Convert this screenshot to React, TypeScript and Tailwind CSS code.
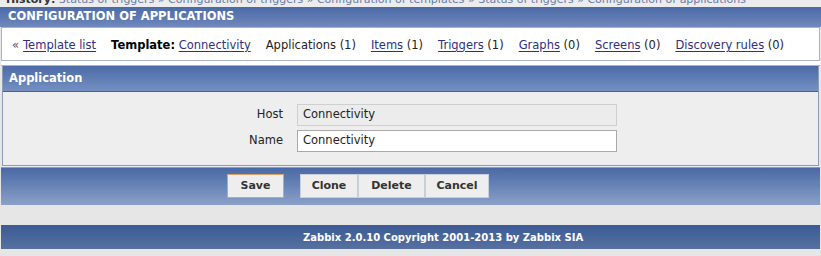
import React from "react";

const font = { fontFamily: '"DejaVu Sans", Verdana, sans-serif' };

function NavLink({ children }: { children: React.ReactNode }) {
  return <span className="underline text-[#2f2f80] underline-offset-[2px]">{children}</span>;
}

export default function App() {
  return (
    <div className="w-[821px] h-[256px] overflow-hidden bg-[#e6e6e6] text-[11.5px] text-black" style={font}>
      {/* History line (cut off) */}
      <div className="h-[7px] overflow-hidden bg-[#ececec]">
        <div className="-mt-[7px] pl-[6px] text-[#6a7ba8] whitespace-nowrap leading-[14px] text-[11px]">
          <span className="font-bold text-[#333]">History:</span> Status of triggers » Configuration of triggers » Configuration of templates » Status of triggers » Configuration of applications
        </div>
      </div>

      {/* Page header */}
      <div className="h-[20px] bg-gradient-to-b from-[#4b6aa6] to-[#7088bd] text-white font-bold pl-[8px] flex items-center">
        CONFIGURATION OF APPLICATIONS
      </div>

      {/* Navigation row */}
      <div className="mx-[1px] h-[34px] bg-white border border-[#a8b4c8] flex items-center pt-[3px] pl-[10px] gap-[15px] whitespace-nowrap text-[#222]">
        <span>
          <span className="text-[#555] mr-[4px]">«</span>
          <NavLink>Template list</NavLink>
        </span>
        <span>
          <span className="font-bold text-black">Template:</span> <NavLink>Connectivity</NavLink>
        </span>
        <span>Applications (1)</span>
        <span>
          <NavLink>Items</NavLink> (1)
        </span>
        <span>
          <NavLink>Triggers</NavLink> (1)
        </span>
        <span>
          <NavLink>Graphs</NavLink> (0)
        </span>
        <span>
          <NavLink>Screens</NavLink> (0)
        </span>
        <span>
          <NavLink>Discovery rules</NavLink> (0)
        </span>
      </div>

      <div className="h-[5px] bg-[#ffffff] border-b border-[#a8b4c8] mx-[1px]" />

      {/* Application form panel */}
      <div className="mx-[2px] border border-[#8d9bb8] border-t-0">
        <div className="h-[26px] bg-gradient-to-b from-[#4b6aa6] to-[#7590c2] border-b border-[#4a5f8c] text-white font-bold flex items-center pl-[6px]">
          Application
        </div>
        <div className="bg-[#eeeeee] pt-[12px] pb-[13px] grid grid-cols-[280px_320px] gap-x-[14px] gap-y-[4px] items-center">
          <div className="text-right text-[#222]">Host</div>
          <div className="h-[22px] border border-[#cfcfcf] bg-[#ececec] flex items-center pl-[5px] text-[#222]">Connectivity</div>
          <div className="text-right text-[#222]">Name</div>
          <div className="h-[22px] border border-[#a9a9a9] bg-white flex items-center pl-[5px] text-[#222]">Connectivity</div>
        </div>
      </div>

      <div className="h-[2px] bg-[#e8ecf3] mx-[1px] border-b border-[#8d9bb8]" />

      {/* Buttons bar */}
      <div className="mx-[1px] h-[37px] bg-gradient-to-b from-[#4a69a5] to-[#8aa0c8] grid grid-cols-[283px_1fr] gap-x-[16px] items-start pt-[6px]">
        <div className="flex justify-end">
          <button className="h-[24px] w-[57px] bg-[#eeeeee] border border-[#d9a46a] font-bold text-[#333] text-[11px]" style={font}>
            Save
          </button>
        </div>
        <div className="flex">
          <button className="h-[24px] w-[58px] bg-[#eeeeee] border border-[#c7cfdd] font-bold text-[#333] text-[11px]" style={font}>
            Clone
          </button>
          <button className="h-[24px] w-[67px] bg-[#eeeeee] border border-[#c7cfdd] font-bold text-[#333] text-[11px]" style={font}>
            Delete
          </button>
          <button className="h-[24px] w-[64px] bg-[#eeeeee] border border-[#c7cfdd] font-bold text-[#333] text-[11px]" style={font}>
            Cancel
          </button>
        </div>
      </div>

      <div className="h-[20px]" />

      {/* Footer */}
      <div className="mx-[1px] h-[24px] bg-gradient-to-b from-[#3c5a96] to-[#56719f] flex items-center pl-[302px] text-white font-bold text-[10px]">
        Zabbix 2.0.10 Copyright 2001-2013 by Zabbix SIA
      </div>
    </div>
  );
}
